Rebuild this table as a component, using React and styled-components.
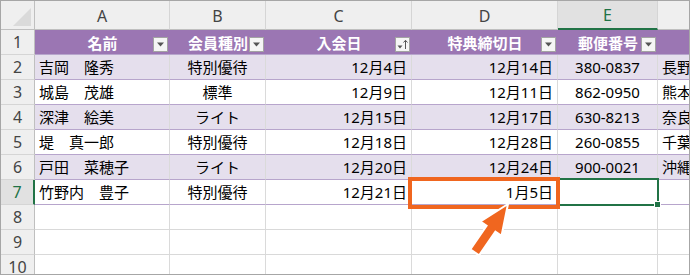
import React from 'react'
import styled, { createGlobalStyle } from 'styled-components'

const GlobalStyle = createGlobalStyle`
  html, body { margin: 0; padding: 0; background: #fff; }
  body { font-family: "Noto Sans CJK JP", "Noto Sans", sans-serif; }
`

const Frame = styled.div`
  position: relative;
  width: 688px;
  height: 273px;
  border: 1px solid #a6a6a6;
  overflow: hidden;
  background: #fff;
`

const Sheet = styled.div`
  display: grid;
  grid-template-columns: 34px 135px 96px 146px 146px 100px 220px;
  grid-template-rows: 29px repeat(10, 25px);
`

const Corner = styled.div`
  position: relative;
  background: #efefef;
  border-right: 1px solid #bfbfbf;
  border-bottom: 1px solid #bfbfbf;
  &::after {
    content: '';
    position: absolute;
    right: 3px;
    bottom: 3px;
    border-style: solid;
    border-width: 0 0 18px 18px;
    border-color: transparent transparent #dadada transparent;
  }
`

const ColHead = styled.div`
  display: flex;
  align-items: center;
  justify-content: center;
  background: ${p => (p.$active ? '#e1e1e1' : '#efefef')};
  color: ${p => (p.$active ? '#217346' : '#444')};
  border-right: 1px solid #d5d5d5;
  border-bottom: ${p => (p.$active ? '2px solid #217346' : '1px solid #bfbfbf')};
  font-family: "Noto Sans", "DejaVu Sans", sans-serif;
  font-size: 16px;
  padding-top: 1px;
  box-sizing: border-box;
`

const RowHead = styled.div`
  display: flex;
  align-items: center;
  justify-content: center;
  background: ${p => (p.$active ? '#e1e1e1' : '#efefef')};
  color: ${p => (p.$active ? '#217346' : '#444')};
  border-right: ${p => (p.$active ? '2px solid #217346' : '1px solid #bfbfbf')};
  border-bottom: 1px solid #d5d5d5;
  font-family: "Noto Sans", "DejaVu Sans", sans-serif;
  font-size: 16px;
  box-sizing: border-box;
`

const HeadCell = styled.div`
  position: relative;
  display: flex;
  align-items: center;
  justify-content: center;
  background: #9b76b3;
  color: #fff;
  font-weight: 700;
  font-size: 15px;
  line-height: 1;
  border-bottom: 1px solid #b7a5cc;
  white-space: nowrap;
  overflow: hidden;
`

const FilterButton = styled.div`
  position: absolute;
  right: 2px;
  bottom: 2px;
  width: 13px;
  height: 13px;
  background: #f5f5f5;
  border: 1px solid #a3a3a3;
  display: flex;
  align-items: center;
  justify-content: center;
`

const Cell = styled.div`
  position: relative;
  display: flex;
  align-items: center;
  justify-content: ${p => p.$align};
  padding: 1px 4px 0 4px;
  background: ${p => p.$bg};
  border-right: 1px solid #dadada;
  border-bottom: 1px solid ${p => (p.$table ? '#b7a5cc' : '#d9d9d9')};
  font-family: "Noto Sans", "Noto Sans CJK JP", sans-serif;
  font-size: 15px;
  line-height: 1;
  color: #000;
  white-space: nowrap;
  overflow: ${p => (p.$selected ? 'visible' : 'hidden')};
  box-sizing: border-box;
  z-index: ${p => (p.$selected ? 2 : 'auto')};
`

const Selection = styled.div`
  position: absolute;
  left: -2px;
  top: -2px;
  right: -2px;
  bottom: -2px;
  border: 2px solid #217346;
  pointer-events: none;
  &::after {
    content: '';
    position: absolute;
    right: -4px;
    bottom: -4px;
    width: 5px;
    height: 5px;
    background: #217346;
    border: 1px solid #fff;
  }
`

const Highlight = styled.div`
  position: absolute;
  left: 407px;
  top: 176px;
  width: 144px;
  height: 24px;
  border: 4px solid #f0661f;
  z-index: 3;
`

const Pointer = styled.svg`
  position: absolute;
  left: 460px;
  top: 195px;
  z-index: 4;
`

const Caret = () => (
  <svg width="9" height="5" viewBox="0 0 9 5">
    <polygon points="1,0.5 8,0.5 4.5,4.5" fill="#555" />
  </svg>
)

const SortCaret = () => (
  <svg width="13" height="13" viewBox="0 0 13 13">
    <polygon points="1.5,7.5 6.5,7.5 4,10.5" fill="#555" />
    <line x1="9.5" y1="2.5" x2="9.5" y2="11" stroke="#555" strokeWidth="1" />
    <polyline points="7.5,4.5 9.5,2.3 11.5,4.5" fill="none" stroke="#555" strokeWidth="1" />
  </svg>
)

const letters = ['A', 'B', 'C', 'D', 'E', 'F']

const headers = [
  { label: '名前', btn: 'plain' },
  { label: '会員種別', btn: 'plain' },
  { label: '入会日', btn: 'sort' },
  { label: '特典締切日', btn: 'plain' },
  { label: '郵便番号', btn: 'plain' },
  { label: '', btn: null },
]

const aligns = ['flex-start', 'center', 'flex-end', 'flex-end', 'center', 'flex-start']

const rows = [
  ['吉岡　隆秀', '特別優待', '12月4日', '12月14日', '380-0837', '長野県'],
  ['城島　茂雄', '標準', '12月9日', '12月11日', '862-0950', '熊本県'],
  ['深津　絵美', 'ライト', '12月15日', '12月17日', '630-8213', '奈良県'],
  ['堤　真一郎', '特別優待', '12月18日', '12月28日', '260-0855', '千葉県'],
  ['戸田　菜穂子', 'ライト', '12月20日', '12月24日', '900-0021', '沖縄県'],
  ['竹野内　豊子', '特別優待', '12月21日', '1月5日', '', ''],
]

export default function App() {
  return (
    <Frame>
      <GlobalStyle />
      <Sheet>
        <Corner />
        {letters.map(l => (
          <ColHead key={l} $active={l === 'E'}>{l}</ColHead>
        ))}

        <RowHead>1</RowHead>
        {headers.map((h, i) => (
          <HeadCell key={i}>
            {h.label}
            {h.btn && (
              <FilterButton>{h.btn === 'sort' ? <SortCaret /> : <Caret />}</FilterButton>
            )}
          </HeadCell>
        ))}

        {rows.map((r, ri) => (
          <React.Fragment key={ri}>
            <RowHead $active={ri === 5}>{ri + 2}</RowHead>
            {r.map((v, ci) => {
              const selected = ri === 5 && ci === 4
              return (
                <Cell
                  key={ci}
                  $table
                  $align={aligns[ci]}
                  $bg={ri % 2 === 0 ? '#e5dfed' : '#fff'}
                  $selected={selected}
                >
                  {v}
                  {selected && <Selection />}
                </Cell>
              )
            })}
          </React.Fragment>
        ))}

        {[8, 9, 10].map(n => (
          <React.Fragment key={n}>
            <RowHead>{n}</RowHead>
            {letters.map(l => (
              <Cell key={l} $align="flex-start" $bg="#fff" />
            ))}
          </React.Fragment>
        ))}
      </Sheet>

      <Highlight />

      <Pointer width="60" height="70" viewBox="460 195 60 70">
        <polygon
          points="507,203 500.5,234.9 494.4,230.7 478.1,254.4 469.3,248.4 485.6,224.7 479.5,220.5"
          fill="#f0661f"
          stroke="#fff"
          strokeWidth="2"
          strokeLinejoin="miter"
        />
      </Pointer>
    </Frame>
  )
}
